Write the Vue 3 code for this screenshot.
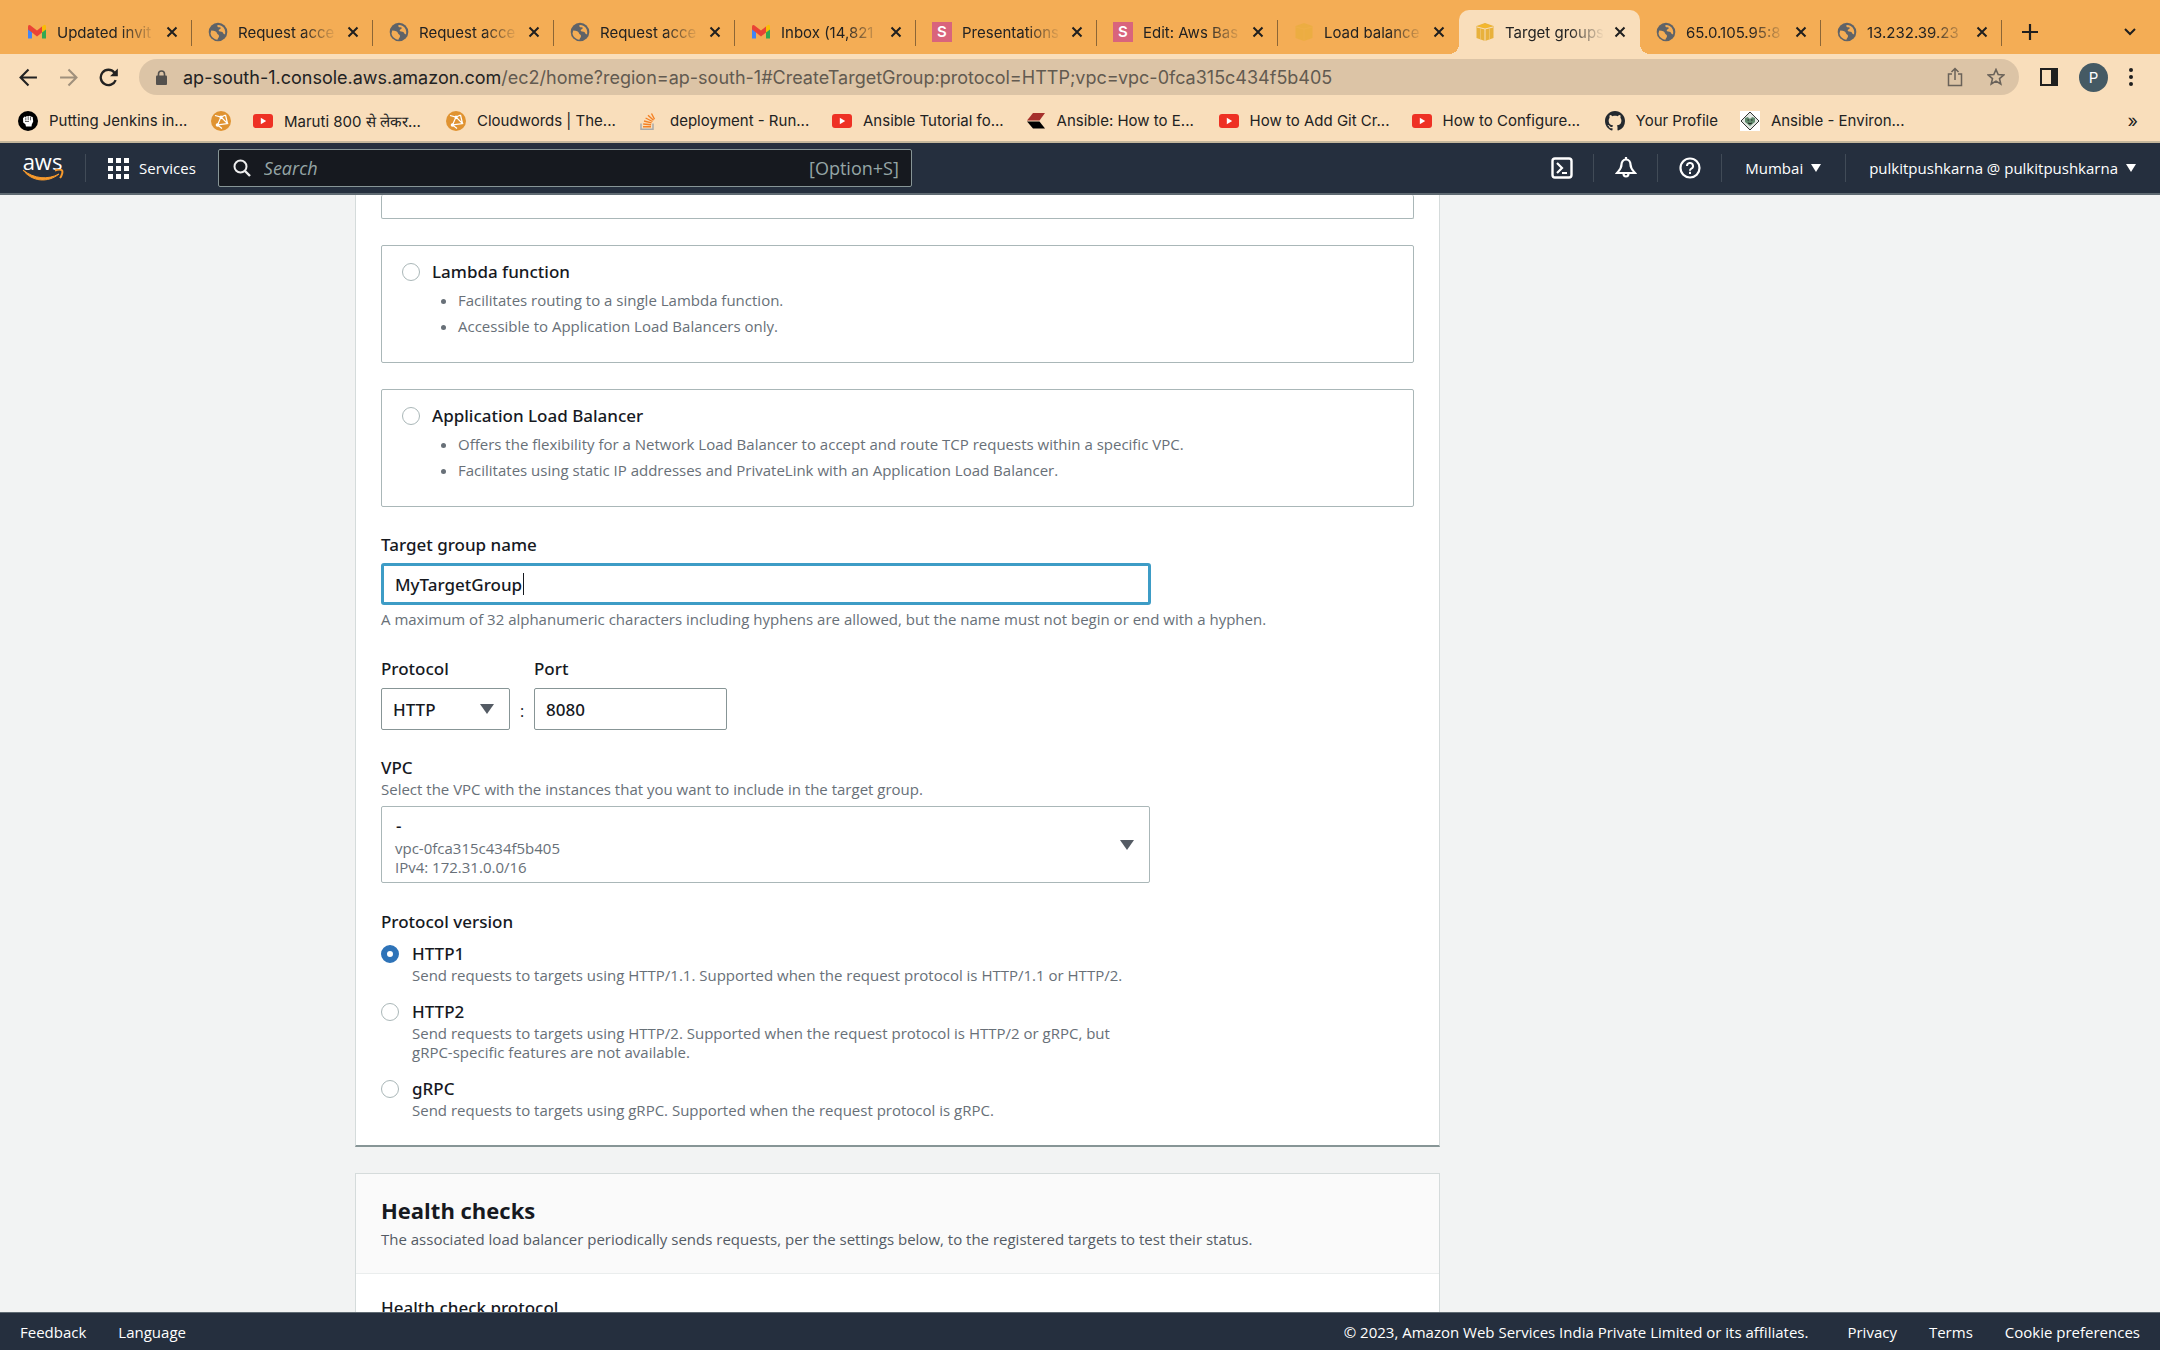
<script setup>
import { ref } from 'vue'

const tabs = [
  { icon: 'gmail', title: 'Updated invit' },
  { icon: 'globe', title: 'Request acce' },
  { icon: 'globe', title: 'Request acce' },
  { icon: 'globe', title: 'Request acce' },
  { icon: 'gmail', title: 'Inbox (14,821' },
  { icon: 'slides', title: 'Presentations' },
  { icon: 'slides', title: 'Edit: Aws Bas' },
  { icon: 'cube-dim', title: 'Load balance' },
  { icon: 'cube', title: 'Target groups', active: true },
  { icon: 'globe', title: '65.0.105.95:8' },
  { icon: 'globe', title: '13.232.39.23' }
]

const bookmarks = [
  { icon: 'fist', title: 'Putting Jenkins in...' },
  { icon: 'cloud', title: '' },
  { icon: 'youtube', title: 'Maruti 800 से लेकर...' },
  { icon: 'cloud', title: 'Cloudwords | The...' },
  { icon: 'stack', title: 'deployment - Run...' },
  { icon: 'youtube', title: 'Ansible Tutorial fo...' },
  { icon: 'chevrons', title: 'Ansible: How to E...' },
  { icon: 'youtube', title: 'How to Add Git Cr...' },
  { icon: 'youtube', title: 'How to Configure...' },
  { icon: 'github', title: 'Your Profile', natural: true },
  { icon: 'diamond', title: 'Ansible - Environ...' }
]

const targetTypes = [
  {
    id: 'lambda',
    title: 'Lambda function',
    points: [
      'Facilitates routing to a single Lambda function.',
      'Accessible to Application Load Balancers only.'
    ]
  },
  {
    id: 'alb',
    title: 'Application Load Balancer',
    points: [
      'Offers the flexibility for a Network Load Balancer to accept and route TCP requests within a specific VPC.',
      'Facilitates using static IP addresses and PrivateLink with an Application Load Balancer.'
    ]
  }
]

const versions = [
  { id: 'HTTP1', text: 'Send requests to targets using HTTP/1.1. Supported when the request protocol is HTTP/1.1 or HTTP/2.' },
  { id: 'HTTP2', text: 'Send requests to targets using HTTP/2. Supported when the request protocol is HTTP/2 or gRPC, but gRPC-specific features are not available.' },
  { id: 'gRPC', text: 'Send requests to targets using gRPC. Supported when the request protocol is gRPC.' }
]

const targetType = ref('')
const name = ref('MyTargetGroup')
const port = ref('8080')
const version = ref('HTTP1')
</script>

<template>
  <div class="window">
    <svg class="sprite" aria-hidden="true">
      <symbol id="i-gmail" viewBox="0 0 20 20">
        <path d="M1 5v11.500h4V9z" fill="#4285f4" />
        <path d="M19 5v11.500h-4V9z" fill="#34a853" />
        <path d="M15 4.500 17 3q2-.8 2 2v2.500l-4 3z" fill="#fbbc04" />
        <path d="M1 5q0-2.800 2.200-1.800L10 8.500l5-4v6l-5 4-5-4-4-3z" fill="#ea4335" />
      </symbol>
      <symbol id="i-globe" viewBox="0 0 20 20">
        <circle cx="10" cy="10" r="9.300" fill="#5f6368" />
        <path d="M3.200 8.500c3.500.3 5.300 1 5.800 2.700.3 1.300 2 1 2 2.800 0 1.500-1 2-1.600 3.700-3.800-.3-6.400-3.300-6.900-6.200zM9.500 3c-.6 1.800.5 2.500 2 2.300 1.800 0 1.500 1.400.2 2-1.600.6-1.200 2.300.5 2.300 2 0 2.700.7 3.200 2 .4.900 1 .8 1.700.6.600-3.500-.4-6.500-3.400-8.300C12.300 3.200 11 2.900 9.500 3z" fill="#f4ad55" />
      </symbol>
      <symbol id="i-cube" viewBox="0 0 20 20">
        <path d="M10 1 18.500 4v12L10 19 1.500 16V4z" fill="#e8b13c" />
        <path d="M10 1.500 17 4.300 10 6.600 3 4.300z" fill="#f3b72e" />
        <path d="M10 7v12M2 5l8 2 8-2" stroke="#f9debb" stroke-width="1" fill="none" />
        <path d="M5.500 6.200v11.300M14.500 6.200v11.300" stroke="#f2cd85" stroke-width=".6" />
      </symbol>
      <symbol id="i-cube-dim" viewBox="0 0 20 20">
        <path d="M10 1 18.500 4v12L10 19 1.500 16V4z" fill="#e9ad3c" opacity=".75" />
        <path d="M10 7v12M2 5l8 2 8-2" stroke="#f1b04e" stroke-width=".6" fill="none" />
      </symbol>
      <symbol id="i-fist" viewBox="0 0 20 20">
        <circle cx="10" cy="10" r="10" fill="#000" />
        <path d="M5 7.200 6.600 5.500l1.200.6 1-1 1.500.4 1.200-.7 1.200.8 2 .3.500 4.500-1.400 3.200-.3 2H8l-.6-2.400-2.200-1.800z" fill="#fff" />
        <path d="M7.800 6.500v3M10.200 6v3.300M12.500 6v3.300M7 10.500h4" stroke="#000" stroke-width=".6" />
      </symbol>
      <symbol id="i-cloud" viewBox="0 0 20 20">
        <circle cx="10" cy="10" r="10" fill="#e09331" />
        <path d="M4 4.500 10 6l4.500-2M10 6 6.500 14M10 6l6.500 6.500L6.500 14l4.500 3.500M14.500 4l2 8.500" fill="none" stroke="#fff" stroke-width="1.200" />
        <circle cx="10" cy="6" r="1.500" fill="#fff" /><circle cx="6.500" cy="14" r="1.800" fill="#fff" />
      </symbol>
      <symbol id="i-youtube" viewBox="0 0 20 20">
        <rect y="3" width="20" height="14" rx="3" fill="#ee3124" />
        <path d="M7.800 6.800v6.400l5.400-3.200z" fill="#fff" />
      </symbol>
      <symbol id="i-stack" viewBox="0 0 20 20">
        <path d="M2 12.500v5.700h12v-5.700" fill="none" stroke="#a9a9a9" stroke-width="1.500" />
        <path d="M4 15.800h8M4.200 13l7.900.8M5 10l7.600 1.900M6.600 7l6.900 3.500M9 4.200l5.500 5M12.500 2.500l3 5.800" stroke="#f48024" stroke-width="1.400" />
      </symbol>
      <symbol id="i-chevrons" viewBox="0 0 20 20">
        <path d="M7 2h12l-5.500 7.500H1z" fill="#a5302c" />
        <path d="M1 10.500h12.500L19 17.500H7z" fill="#000" />
      </symbol>
      <symbol id="i-github" viewBox="0 0 16 16">
        <path fill="#24292f" d="M8 0C3.580 0 0 3.580 0 8c0 3.540 2.290 6.530 5.470 7.590.4.070.55-.17.55-.38 0-.19-.01-.82-.01-1.490-2.010.37-2.530-.49-2.690-.94-.09-.23-.48-.94-.82-1.130-.28-.15-.68-.52-.01-.53.63-.01 1.080.58 1.230.82.72 1.210 1.870.87 2.330.66.07-.52.28-.87.51-1.070-1.780-.2-3.640-.89-3.640-3.950 0-.87.31-1.590.82-2.150-.08-.2-.36-1.020.08-2.120 0 0 .67-.21 2.200.82.64-.18 1.320-.27 2-.27s1.360.09 2 .27c1.530-1.040 2.200-.82 2.200-.82.44 1.100.16 1.920.08 2.120.51.56.82 1.270.82 2.150 0 3.070-1.870 3.750-3.650 3.950.29.25.54.73.54 1.480 0 1.070-.01 1.930-.01 2.200 0 .21.15.46.55.38A8.010 8.010 0 0 0 16 8c0-4.420-3.580-8-8-8z" />
      </symbol>
      <symbol id="i-diamond" viewBox="0 0 20 20">
        <rect width="20" height="20" fill="#fff" />
        <path d="M10 1l9 9-9 9-9-9z" fill="#dfe5e0" stroke="#333" stroke-width="1" />
        <path d="M5 7l3-1 1 1.500h2L12 6l3 1v4l-5 4-5-4z" fill="#5f8a6c" />
        <path d="M7.500 9h1.500M11 9h1.500M8 12q2 1.500 4 0" stroke="#222" stroke-width="1" fill="none" />
      </symbol>
      <symbol id="i-close" viewBox="0 0 12 12">
        <path d="M1.500 1.500l9 9M10.500 1.500l-9 9" stroke="#1f1f1f" stroke-width="2" />
      </symbol>
    </svg>

    <header class="browser">
      <div class="tabstrip">
        <div v-for="(t, i) in tabs" :key="i" class="tab" :class="{ active: t.active, bare: i === 7 }">
          <span v-if="t.icon === 'slides'" class="fav fav-s">S</span>
          <svg v-else class="fav"><use :href="'#i-' + t.icon" /></svg>
          <span class="tab-title">{{ t.title }}</span>
          <button class="plain" aria-label="Close tab"><svg class="x"><use href="#i-close" /></svg></button>
        </div>
        <button class="plain new-tab" aria-label="New tab">
          <svg width="16" height="16" viewBox="0 0 16 16"><path d="M8 0v16M0 8h16" stroke="#1f1f1f" stroke-width="2.200" /></svg>
        </button>
        <button class="plain tab-search" aria-label="Search tabs">
          <svg width="12" height="8" viewBox="0 0 12 8"><path d="M1 1l5 5 5-5" fill="none" stroke="#1f1f1f" stroke-width="2" /></svg>
        </button>
      </div>

      <div class="toolbar">
        <button class="plain" aria-label="Back"><svg class="tb" viewBox="0 0 18 18"><path d="M17 9H2M9 1.500 1.500 9 9 16.500" fill="none" stroke="#222" stroke-width="2" /></svg></button>
        <button class="plain" aria-label="Forward"><svg class="tb" viewBox="0 0 18 18"><path d="M1 9h15M9 1.500 16.500 9 9 16.500" fill="none" stroke="#a0907c" stroke-width="2" /></svg></button>
        <button class="plain" aria-label="Reload"><svg class="tb" viewBox="0 0 18 18"><path d="M15.800 11.500A7.300 7.300 0 1 1 14.500 4.200L16 6" fill="none" stroke="#222" stroke-width="2.200" /><path d="M17.800.5v7.300h-7.300z" fill="#222" /></svg></button>
        <div class="omnibox">
          <svg width="11" height="15" viewBox="0 0 11 15"><rect y="5.500" width="11" height="9.500" rx="1" fill="#54514d" /><path d="M2.500 6V4a3 3 0 0 1 6 0v2" fill="none" stroke="#54514d" stroke-width="1.600" /></svg>
          <span class="url"><b>ap-south-1.console.aws.amazon.com</b>/ec2/home?region=ap-south-1#CreateTargetGroup:protocol=HTTP;vpc=vpc-0fca315c434f5b405</span>
          <svg width="16" height="20" viewBox="0 0 16 20"><path d="M5 7H1.500v11.500h13V7H11M8 13V2M4.500 5 8 1.500 11.500 5" fill="none" stroke="#6a6259" stroke-width="1.500" /></svg>
          <svg width="18" height="18" viewBox="0 0 18 18"><path d="M9 1.500l2.200 5 5.500.5-4.200 3.600 1.300 5.400L9 13.100 4.200 16l1.300-5.400L1.300 7l5.500-.5z" fill="none" stroke="#6a6259" stroke-width="1.600" /></svg>
        </div>
        <button class="plain" aria-label="Side panel"><svg width="18" height="18" viewBox="0 0 18 18"><rect x="1" y="1" width="16" height="16" fill="none" stroke="#1f1f1f" stroke-width="2" /><path d="M11 1h6v16h-6z" fill="#1f1f1f" /></svg></button>
        <button class="plain avatar" aria-label="Profile">P</button>
        <button class="plain" aria-label="Menu"><svg width="4" height="18" viewBox="0 0 4 18"><g fill="#1f1f1f"><circle cx="2" cy="2" r="2" /><circle cx="2" cy="9" r="2" /><circle cx="2" cy="16" r="2" /></g></svg></button>
      </div>

      <nav class="bookmarks">
        <a v-for="(b, i) in bookmarks" :key="i" href="#" class="bookmark" :class="{ natural: b.natural || !b.title }">
          <svg class="fav"><use :href="'#i-' + b.icon" /></svg>
          <span v-if="b.title">{{ b.title }}</span>
        </a>
        <button class="plain overflow" aria-label="More bookmarks">»</button>
      </nav>
    </header>

    <nav class="aws-nav">
      <a href="#" class="logo" aria-label="AWS home">
        <span>aws</span>
        <svg width="42" height="13" viewBox="0 0 42 13"><path d="M1 1c11 9 25 10 36 4-11 9-27 8-36-4z" fill="#f79a2c" stroke="#f79a2c" stroke-width="1" /><path d="M33 1.500c3-1 6-1 7 0s0 5-2 7.500" fill="none" stroke="#f79a2c" stroke-width="2" /></svg>
      </a>
      <button class="plain services">
        <svg width="21" height="21" viewBox="0 0 21 21"><path d="M0 0h5v5H0zM8 0h5v5H8zM16 0h5v5h-5zM0 8h5v5H0zM8 8h5v5H8zM16 8h5v5h-5zM0 16h5v5H0zM8 16h5v5H8zM16 16h5v5h-5z" fill="#fff" /></svg>
        Services
      </button>
      <label class="search">
        <svg width="18" height="18" viewBox="0 0 18 18"><circle cx="7.500" cy="7.500" r="6" fill="none" stroke="#eee" stroke-width="2" /><path d="M12 12l5 5" stroke="#eee" stroke-width="2.400" /></svg>
        <input type="text" placeholder="Search" aria-label="Search">
        <span>[Option+S]</span>
      </label>
      <div class="nav-right">
        <button class="plain icon-btn" aria-label="CloudShell"><svg width="22" height="22" viewBox="0 0 22 22"><rect x="1.500" y="1.500" width="19" height="19" rx="2.500" fill="none" stroke="#fff" stroke-width="2.400" /><path d="M6 6l5 5-5 5M11 16h5" fill="none" stroke="#fff" stroke-width="2.200" /></svg></button>
        <button class="plain icon-btn" aria-label="Notifications"><svg width="22" height="22" viewBox="0 0 22 22"><path d="M11 2.500c-3 0-4.500 2.500-4.500 5 0 4-2 5.500-4.500 8.500h18c-2.500-3-4.500-4.500-4.500-8.500 0-2.500-1.500-5-4.500-5zM11 0v3M8.500 16.500a2.500 3 0 0 0 5 0" fill="none" stroke="#fff" stroke-width="2.200" /></svg></button>
        <button class="plain icon-btn" aria-label="Help"><svg width="22" height="22" viewBox="0 0 22 22"><circle cx="11" cy="11" r="9.500" fill="none" stroke="#fff" stroke-width="2.200" /><path d="M8 9a3 3 0 1 1 4.300 2.700c-1 .5-1.300 1-1.300 2M11 14.800v2.200" fill="none" stroke="#fff" stroke-width="2" /></svg></button>
        <button class="plain menu-btn">Mumbai <i class="tri" /></button>
        <button class="plain menu-btn">pulkitpushkarna @ pulkitpushkarna <i class="tri" /></button>
      </div>
    </nav>

    <main class="content">
      <form class="column" @submit.prevent>
        <section class="panel first">
          <div class="card cut" />
          <div v-for="t in targetTypes" :key="t.id" class="card">
            <input :id="t.id" v-model="targetType" type="radio" name="target-type" :value="t.id">
            <div>
              <label :for="t.id" class="label">{{ t.title }}</label>
              <ul>
                <li v-for="p in t.points" :key="p">{{ p }}</li>
              </ul>
            </div>
          </div>

          <div class="field">
            <label class="label" for="tg-name">Target group name</label>
            <div class="focus-wrap">
              <input id="tg-name" v-model="name" type="text" class="text-input focused">
              <span class="caret" />
            </div>
            <p class="hint">A maximum of 32 alphanumeric characters including hyphens are allowed, but the name must not begin or end with a hyphen.</p>
          </div>

          <div class="row">
            <div class="field protocol">
              <label class="label" for="protocol">Protocol</label>
              <div class="select-wrap">
                <select id="protocol" class="text-input"><option>HTTP</option></select>
                <i class="tri big" />
              </div>
            </div>
            <span class="colon">:</span>
            <div class="field port">
              <label class="label" for="port">Port</label>
              <input id="port" v-model="port" type="text" class="text-input">
            </div>
          </div>

          <div class="field vpc">
            <label class="label" for="vpc">VPC</label>
            <p class="hint">Select the VPC with the instances that you want to include in the target group.</p>
            <div class="select-wrap">
              <select id="vpc"><option>-</option></select>
              <div class="vpc-detail">vpc-0fca315c434f5b405<br>IPv4: 172.31.0.0/16</div>
              <i class="tri big" />
            </div>
          </div>

          <fieldset class="versions">
            <legend class="label">Protocol version</legend>
            <div v-for="v in versions" :key="v.id" class="version">
              <input :id="v.id" v-model="version" type="radio" name="version" :value="v.id">
              <div>
                <label :for="v.id" class="label">{{ v.id }}</label>
                <p class="hint">{{ v.text }}</p>
              </div>
            </div>
          </fieldset>
        </section>

        <section class="panel">
          <div class="panel-head">
            <h2>Health checks</h2>
            <p class="hint">The associated load balancer periodically sends requests, per the settings below, to the registered targets to test their status.</p>
          </div>
          <div class="panel-body">
            <label class="label" for="hc-protocol">Health check protocol</label>
            <select id="hc-protocol" class="text-input"><option>HTTP</option></select>
          </div>
        </section>
      </form>
    </main>

    <footer class="footer">
      <a href="#">Feedback</a>
      <a href="#">Language</a>
      <span class="copy">© 2023, Amazon Web Services India Private Limited or its affiliates.</span>
      <a href="#">Privacy</a>
      <a href="#">Terms</a>
      <a href="#">Cookie preferences</a>
    </footer>
  </div>
</template>

<style>
body { margin: 0; }
</style>

<style scoped>
* { box-sizing: border-box; }
.window { display: flex; flex-direction: column; height: 100vh; overflow: hidden; font-family: "Open Sans", sans-serif; font-size: 16px; color: #16191f; background: #f2f3f3; }
.sprite { position: absolute; width: 0; height: 0; }
.plain { border: 0; background: none; padding: 0; margin: 0; font: inherit; color: inherit; display: flex; align-items: center; justify-content: center; }
a { color: inherit; text-decoration: none; }
svg { flex: none; display: block; }
.fav { width: 20px; height: 20px; flex: none; }

.browser { flex: none; background: #f9debb; font-family: Inter, sans-serif; font-size: 15px; color: #222; border-bottom: 2px solid #c5b79c; }
.tabstrip { display: flex; align-items: stretch; height: 54px; padding: 10px 22px 0 11px; background: #f4ad55; }
.tab { position: relative; flex: 0 1 181px; min-width: 0; display: flex; align-items: center; gap: 10px; padding: 0 14px 0 16px; }
.tab::after { content: ""; position: absolute; right: 0; top: 10px; height: 26px; width: 1px; background: #8c6636; }
.tab.bare::after { display: none; }
.tab-title { flex: 1; min-width: 0; overflow: hidden; white-space: nowrap; mask-image: linear-gradient(90deg, #000 65%, transparent); }
.tab.active { background: #f9debb; border-radius: 10px 10px 0 0; }
.tab.active::before, .tab.active::after { content: ""; position: absolute; top: auto; bottom: 0; width: 10px; height: 10px; }
.tab.active::before { left: -10px; background: radial-gradient(circle at 0 0, transparent 10px, #f9debb 10px); }
.tab.active::after { right: -10px; background: radial-gradient(circle at 100% 0, transparent 10px, #f9debb 10px); }
.x { width: 12px; height: 12px; }
.fav-s { background: #d9647c; color: #fff; text-align: center; line-height: 20px; font-weight: 600; }
.new-tab { width: 56px; }
.tab-search { margin-left: auto; width: 16px; }

.toolbar { display: flex; align-items: center; gap: 21px; height: 46px; padding: 0 27px 0 19px; }
.tb { width: 19px; height: 19px; }
.omnibox { flex: 1; display: flex; align-items: center; gap: 16px; height: 36px; padding: 0 14px 0 17px; border-radius: 18px; background: #dcc4a6; }
.omnibox svg + svg { margin-left: 8px; }
.url { flex: 1; font-size: 18px; color: #625a50; white-space: nowrap; overflow: hidden; }
.url b { font-weight: 400; color: #222; }
.avatar { width: 29px; height: 29px; border-radius: 50%; background: #455a64; color: #fff; font-size: 15px; }

.bookmarks { display: flex; align-items: center; gap: 22px; height: 41px; padding: 0 22px 0 18px; }
.bookmark { display: flex; align-items: center; gap: 11px; flex: 0 1 171px; white-space: nowrap; }
.bookmark.natural { flex: none; }
.overflow { margin-left: auto; font-size: 18px; }

.aws-nav { flex: none; display: flex; align-items: center; height: 52px; padding-left: 23px; background: #252f3e; color: #fff; font-size: 15px; font-weight: 500; border-bottom: 2px solid #5f6a72; }
.logo { display: flex; flex-direction: column; align-items: center; width: 63px; padding-right: 23px; border-right: 1px solid #414b57; height: 28px; font-size: 22px; line-height: 15px; font-weight: 500; }
.services { gap: 10px; padding: 0 22px; }
.search { display: flex; align-items: center; gap: 13px; width: 694px; height: 38px; padding: 0 12px 0 14px; background: #16191f; border: 1px solid #879596; border-radius: 2px; color: #95a5a6; font-size: 18px; font-weight: 400; }
.search input { flex: 1; min-width: 0; border: 0; outline: 0; background: none; font: inherit; color: #fff; padding: 0; }
.search input::placeholder { color: #95a5a6; font-style: italic; opacity: 1; }
.nav-right { margin-left: auto; display: flex; align-items: center; }
.icon-btn { width: 64px; height: 28px; border-right: 1px solid #414b57; }
.menu-btn { gap: 8px; height: 28px; padding: 0 24px 0 23px; }
.menu-btn:not(:last-child) { border-right: 1px solid #414b57; }
.tri { width: 0; height: 0; border: 5px solid transparent; border-top: 8px solid currentColor; border-bottom: 0; }
.tri.big { border-width: 10px 7px 0; color: #545b64; }

.content { flex: 1; min-height: 0; overflow: hidden; display: grid; grid-template-columns: minmax(0, 355px) minmax(0, 1085px) minmax(0, 1fr); }
.column { grid-column: 2; display: flex; flex-direction: column; gap: 26px; }
.panel { background: #fff; border: 1px solid #d5dbdb; border-bottom: 2px solid #879596; }
.panel.first { border-top: 0; padding: 0 25px 25px; }
.label { display: block; font-family: "Noto Sans", sans-serif; font-size: 17px; line-height: 24px; font-weight: 500; color: #16191f; }
.hint { margin: 0; font-size: 15px; line-height: 19px; color: #687078; }
.card { display: flex; gap: 12px; height: 118px; padding: 14px 20px; margin-bottom: 26px; border: 1px solid #aab7b8; border-radius: 2px; }
.card.cut { height: 24px; padding: 0; border-top: 0; }
ul { margin: 3px 0 0; padding-left: 26px; font-size: 15px; line-height: 26px; color: #687078; }

input[type="radio"] { appearance: none; flex: none; width: 18px; height: 18px; margin: 3px 0 0; border: 1px solid #aab7b8; border-radius: 50%; background: #fff; }
input[type="radio"]:checked { border: 6px solid #2e73b8; }

.field { display: flex; flex-direction: column; }
.text-input { width: 100%; height: 42px; padding: 0 11px; border: 1px solid #879596; border-radius: 2px; background: #fff; font-family: "Noto Sans", sans-serif; font-size: 17px; font-weight: 500; color: #16191f; outline: 0; appearance: none; }
.focus-wrap { position: relative; width: 770px; max-width: 100%; margin: 6px 0 5px; }
.focused { border: 3px solid #3d9cc6; border-radius: 3px; }
.caret { position: absolute; left: 142px; top: 10px; width: 1px; height: 22px; background: #16191f; }
.row { display: flex; align-items: flex-end; margin-top: 28px; }
.row .field { gap: 7px; }
.protocol { width: 129px; }
.port { width: 193px; }
.colon { width: 24px; text-align: center; line-height: 38px; }
.select-wrap { position: relative; }
.select-wrap .tri { position: absolute; right: 16px; top: 50%; margin-top: -5px; pointer-events: none; }
.vpc { width: 769px; max-width: 100%; margin-top: 26px; }
.vpc .select-wrap { margin-top: 7px; }
.vpc select { display: block; width: 100%; height: 77px; padding: 0 14px 38px; border: 1px solid #aab7b8; border-radius: 2px; background: #fff; font-family: "Noto Sans", sans-serif; font-size: 17px; font-weight: 500; color: #16191f; appearance: none; }
.vpc-detail { position: absolute; left: 14px; bottom: 6px; font-size: 15px; line-height: 19px; color: #687078; pointer-events: none; }
.versions { border: 0; margin: 27px 0 0; padding: 0; width: 769px; max-width: 100%; display: flex; flex-direction: column; }
.versions legend { padding: 0; margin-bottom: 8px; }
.version { display: flex; gap: 13px; margin-bottom: 15px; }
.version:last-child { margin-bottom: 0; }

.panel-head { padding: 20px 25px 24px; background: #fafafa; border-bottom: 1px solid #eaeded; }
h2 { margin: 0; font-size: 22px; line-height: 32px; font-weight: 700; }
.panel-head .hint { margin-top: 4px; color: #545b64; }
.panel-body { padding: 22px 25px; }

.footer { flex: none; display: flex; align-items: center; gap: 32px; height: 38px; padding: 0 20px; background: #252f3e; border-top: 1px solid #5f6a72; color: #fff; font-size: 15px; font-weight: 500; }
.copy { margin-left: auto; margin-right: 7px; }
</style>
